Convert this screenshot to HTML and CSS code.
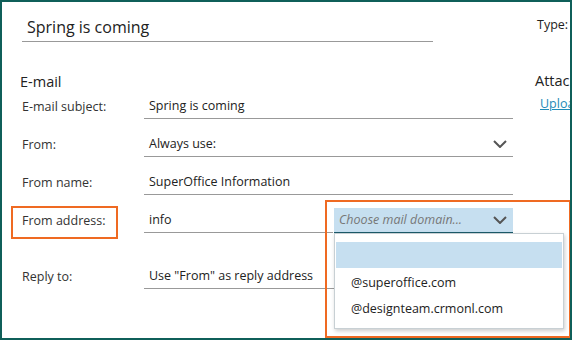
FILE: index.html
```html
<!DOCTYPE html>
<html lang="en">
<head>
    <meta charset="UTF-8">
    <meta name="viewport" content="width=device-width, initial-scale=1.0">
    <title>Mailing - Spring is coming</title>
    <link rel="stylesheet" href="styles.css">
</head>
<body>
    <div class="frame">
        <div class="layout">
            <!-- Main column -->
            <div class="main">
                <div class="title-field">Spring is coming</div>

                <h2 class="section-title">E-mail</h2>

                <div class="form">
                    <div class="row">
                        <div class="label">E-mail subject:</div>
                        <div class="field">Spring is coming</div>
                    </div>
                    <div class="row">
                        <div class="label">From:</div>
                        <div class="field select">
                            <span>Always use:</span>
                            <svg class="chevron" width="14" height="8" viewBox="0 0 14 8"><path d="M1 1 L7 7 L13 1" fill="none" stroke="#555" stroke-width="2"/></svg>
                        </div>
                    </div>
                    <div class="row">
                        <div class="label">From name:</div>
                        <div class="field">SuperOffice Information</div>
                    </div>
                    <div class="row">
                        <div class="label highlighted">From address:</div>
                        <div class="address">
                            <div class="field">info</div>
                            <div class="field domain">
                                <span class="placeholder">Choose mail domain...</span>
                                <svg class="chevron" width="14" height="8" viewBox="0 0 14 8"><path d="M1 1 L7 7 L13 1" fill="none" stroke="#555" stroke-width="2"/></svg>
                            </div>
                        </div>
                    </div>
                    <div class="row reply-row">
                        <div class="label">Reply to:</div>
                        <div class="field">Use "From" as reply address</div>
                    </div>
                </div>
            </div>

            <!-- Side column -->
            <div class="side">
                <div class="side-label">Type:</div>
                <h2 class="side-title">Attachments</h2>
                <a class="upload" href="#">Upload</a>
            </div>
        </div>

        <!-- Open domain list -->
        <ul class="domain-list">
            <li class="active">&nbsp;</li>
            <li>@superoffice.com</li>
            <li>@designteam.crmonl.com</li>
        </ul>
        <div class="callout"></div>
    </div>
</body>
</html>
```

FILE: styles.css
```css
body {
    margin: 0;
    font-family: "Segoe UI", "Open Sans", sans-serif;
    color: #333;
    background: #fff;
}

.frame {
    position: relative;
    box-sizing: border-box;
    width: 572px;
    height: 340px;
    border: 2px solid #0f5f59;
    overflow: hidden;
}

.layout {
    display: grid;
    grid-template-columns: 511px 200px;
    column-gap: 22px;
}

/* Main column */
.main {
    padding: 12px 0 0 18px;
}

.title-field {
    margin-left: 2px;
    width: 406px;
    padding-left: 5px;
    height: 27px;
    line-height: 27px;
    font-size: 16px;
    color: #222;
    border-bottom: 1px solid #999;
}

.section-title {
    margin: 30px 0 2px;
    font-size: 14.5px;
    font-weight: normal;
    line-height: 20px;
    color: #222;
}

.form {
    display: flex;
    flex-direction: column;
    gap: 13px;
    padding-left: 2px;
}

.row {
    position: relative;
    display: grid;
    grid-template-columns: 122px 369px;
    align-items: center;
    font-size: 12.5px;
}

.reply-row {
    margin-top: 18px;
}

.label {
    color: #333;
}

.label.highlighted::before {
    content: "";
    position: absolute;
    left: -11px;
    top: -2px;
    width: 103px;
    height: 29px;
    border: 2px solid #ef6a22;
}

.field {
    height: 24px;
    line-height: 24px;
    padding-left: 5px;
    color: #222;
    border-bottom: 1px solid #999;
}

.select,
.domain {
    display: flex;
    align-items: center;
    justify-content: space-between;
    padding-right: 6px;
}

.address {
    display: flex;
    gap: 1px;
}

.address .field:first-child {
    flex: 1;
}

.domain {
    width: 168px;
    background: #c6dff0;
    border-bottom: 1px solid #1c5a6a;
}

.placeholder {
    font-style: italic;
    color: #777;
}

/* Side column */
.side {
    padding-top: 14px;
}

.side-label {
    font-size: 12.5px;
    line-height: 18px;
    color: #222;
    margin-left: 2px;
    white-space: nowrap;
}

.side-title {
    margin: 37px 0 0;
    font-size: 14.5px;
    font-weight: normal;
    line-height: 20px;
    color: #222;
    white-space: nowrap;
}

.upload {
    display: block;
    margin: 4px 0 0 5px;
    font-size: 12.5px;
    color: #1f8bb8;
    white-space: nowrap;
}

/* Open dropdown */
.domain-list {
    position: absolute;
    left: 332px;
    top: 231px;
    width: 226px;
    margin: 0;
    padding: 8px 1px 6px;
    list-style: none;
    background: #fff;
    border: 1px solid #c8d0d4;
    box-shadow: 1px 2px 4px rgba(0, 0, 0, 0.2);
    font-size: 12.5px;
    color: #222;
}

.domain-list li {
    height: 26px;
    line-height: 26px;
    padding-left: 15px;
}

.domain-list li.active {
    background: #c6dff0;
    margin-bottom: 2px;
}

.callout {
    position: absolute;
    left: 323px;
    top: 198px;
    width: 242px;
    height: 134px;
    border: 2px solid #ef6a22;
}
```
